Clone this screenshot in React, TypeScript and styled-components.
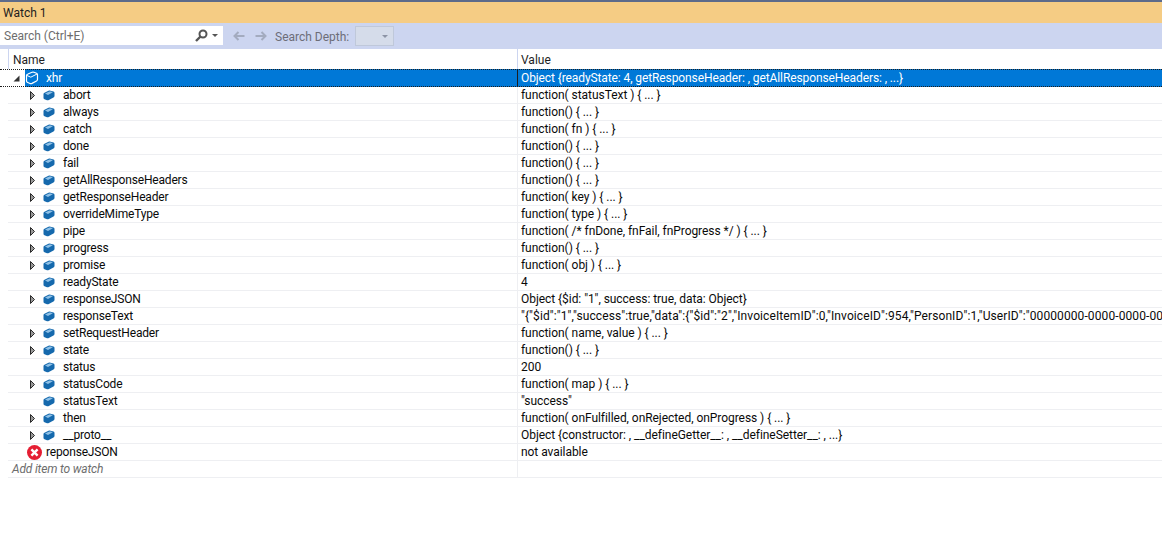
import React from "react";
import styled, { createGlobalStyle } from "styled-components";

const Global = createGlobalStyle`
  html, body { margin: 0; padding: 0; background: #fff; }
  body { font-family: Roboto, "Open Sans", "Liberation Sans", sans-serif; font-size: 12px; color: #0a0a0a; }
`;

const Page = styled.div`
  width: 1162px;
  height: 533px;
  overflow: hidden;
  display: flex;
  flex-direction: column;
  background: #fff;
`;

const TitleBar = styled.div`
  height: 21px;
  border-top: 2px solid #5d6b8a;
  background: #f5cc84;
  display: flex;
  align-items: center;
  padding-left: 3px;
  color: #1e1e1e;
`;

const Toolbar = styled.div`
  height: 26px;
  background: #ccd5f0;
  display: flex;
  align-items: center;
`;

const SearchBox = styled.div`
  width: 223px;
  height: 19px;
  margin-top: -1px;
  background: #fff;
  display: flex;
  align-items: center;
  padding: 0 5px 0 4px;
  box-sizing: border-box;
  color: #6d6d6d;
  justify-content: space-between;
`;

const SearchTools = styled.span`
  display: flex;
  align-items: center;
  gap: 4px;
`;

const NavIcons = styled.span`
  display: flex;
  gap: 10px;
  margin-left: 10px;
  margin-right: 8px;
`;

const DepthLabel = styled.span`
  color: #6d6d78;
  padding-top: 2px;
`;

const DepthSelect = styled.div`
  width: 39px;
  height: 20px;
  margin-left: 6px;
  background: #d5dcea;
  border: 1px solid #bfc8da;
  box-sizing: border-box;
  display: flex;
  align-items: center;
  justify-content: flex-end;
  padding-right: 5px;
`;

const HeaderRow = styled.div`
  height: 20px;
  display: grid;
  grid-template-columns: 517px 1fr;
  background: #fff;
`;

const HeaderCell = styled.div<{ $first?: boolean }>`
  display: flex;
  align-items: center;
  padding: 2px 0 0 ${(p) => (p.$first ? "4px" : "3px")};
  margin-left: ${(p) => (p.$first ? "8px" : "0")};
  border-left: 1px solid #ccd5f0;
  color: #1e1e1e;
`;

const Row = styled.div<{ $selected?: boolean }>`
  height: 17px;
  display: grid;
  grid-template-columns: 517px 1fr;
  box-sizing: border-box;
  white-space: nowrap;
  line-height: 16px;
  ${(p) =>
    p.$selected
      ? `
    height: 18px;
    border-top: 1px dotted #1e1e1e;
    border-bottom: 1px dotted #1e1e1e;
    background: linear-gradient(to right, #fff 25px, #0078d7 25px);
    color: #fff;
  `
      : ""}
`;

const NameCell = styled.div<{ $indent: number; $selected?: boolean }>`
  margin-left: 8px;
  display: flex;
  align-items: center;
  padding-left: ${(p) => p.$indent}px;
  letter-spacing: -0.18px;
  border-bottom: ${(p) => (p.$selected ? "none" : "1px solid #eeeff2")};
  overflow: hidden;
`;

const ValueCell = styled.div<{ $selected?: boolean; $spacing?: number }>`
  padding-left: 3px;
  letter-spacing: ${(p) => p.$spacing ?? -0.05}px;
  border-left: 1px solid ${(p) => (p.$selected ? "#1e1e1e" : "#eeeff2")};
  border-bottom: ${(p) => (p.$selected ? "none" : "1px solid #eeeff2")};
  overflow: hidden;
  display: flex;
  align-items: center;
`;

const Toggle = styled.span<{ $w: number }>`
  width: ${(p) => p.$w}px;
  height: 16px;
  flex: none;
  display: flex;
  align-items: center;
`;

const IconSlot = styled.span<{ $w: number }>`
  width: ${(p) => p.$w}px;
  flex: none;
  display: flex;
  align-items: center;
`;

const AddItem = styled.span`
  color: #6d6d6d;
  font-style: italic;
  padding-left: 4px;
`;

const Cube = ({ white }: { white?: boolean }) =>
  white ? (
    <svg width="14" height="14" viewBox="0 0 14 14">
      <path d="M1.5 4.5 Q1.5 3.5 3 3 L7 1.3 Q8 1 9 1.3 L11.5 2.3 Q12.5 2.7 12.5 3.8 V8.5 Q12.5 9.3 11.5 10 L7 12.4 Q6 12.9 5 12.5 L2.7 11.5 Q1.5 11 1.5 10 Z" fill="#0078d7" stroke="#fff" strokeWidth="1.2" />
      <path d="M2 4.5 L5.8 6.2 L12 3" fill="none" stroke="#fff" strokeWidth="1" />
    </svg>
  ) : (
    <svg width="12" height="11" viewBox="0 0 12 11">
      <path d="M0.5 4 Q0.5 3.2 1.5 2.7 L5.5 0.8 Q6.5 0.4 7.5 0.7 L10.5 1.6 Q11.5 2 11.5 3 V6 Q11.5 6.9 10.5 7.5 L5.8 10.1 Q5 10.5 4 10.2 L1.5 9.3 Q0.5 8.9 0.5 8 Z" fill="#1569ad" />
      <path d="M2 3.6 L6.3 1.5 Q7 1.3 7.8 1.5 L9.8 2.2 L5 4.9 Z" fill="#8ec0e6" />
    </svg>
  );

const ArrowCollapsed = () => (
  <svg width="5" height="9" viewBox="0 0 5 9">
    <path d="M0.5 0.5 L4.5 4.5 L0.5 8.5 Z" fill="#999" stroke="#2a2a2a" strokeWidth="1" />
  </svg>
);

const ArrowExpanded = () => (
  <svg width="7" height="7" viewBox="0 0 7 7">
    <path d="M6.5 0.5 V6.5 H0.5 Z" fill="#333" />
  </svg>
);

const ErrorIcon = () => (
  <svg width="15" height="15" viewBox="0 0 15 15">
    <circle cx="7.5" cy="7.5" r="7.5" fill="#e51e33" />
    <path d="M4.4 4.4 L10.6 10.6 M10.6 4.4 L4.4 10.6" stroke="#fff" strokeWidth="2.4" />
  </svg>
);

const SearchIcon = () => (
  <svg width="13" height="13" viewBox="0 0 13 13">
    <circle cx="8" cy="5" r="3.5" fill="none" stroke="#555" strokeWidth="2" />
    <path d="M5.5 7.5 L1 12" stroke="#555" strokeWidth="2.4" />
  </svg>
);

const Caret = ({ color }: { color: string }) => (
  <svg width="6" height="3" viewBox="0 0 6 3">
    <path d="M0 0 H6 L3 3 Z" fill={color} />
  </svg>
);

const NavArrow = ({ flip }: { flip?: boolean }) => (
  <svg width="12" height="10" viewBox="0 0 12 10" style={flip ? { transform: "scaleX(-1)" } : undefined}>
    <path d="M5.5 1 L1.5 5 L5.5 9 M1.5 5 H11.5" fill="none" stroke="#a3abbf" strokeWidth="2" />
  </svg>
);

const children: [string, string, boolean, number?][] = [
  ["abort", "function( statusText ) { ... }", true],
  ["always", "function() { ... }", true],
  ["catch", "function( fn ) { ... }", true],
  ["done", "function() { ... }", true],
  ["fail", "function() { ... }", true],
  ["getAllResponseHeaders", "function() { ... }", true],
  ["getResponseHeader", "function( key ) { ... }", true],
  ["overrideMimeType", "function( type ) { ... }", true],
  ["pipe", "function( /* fnDone, fnFail, fnProgress */ ) { ... }", true],
  ["progress", "function() { ... }", true],
  ["promise", "function( obj ) { ... }", true],
  ["readyState", "4", false],
  ["responseJSON", "Object {$id: \"1\", success: true, data: Object}", true],
  ["responseText", "\"{\"$id\":\"1\",\"success\":true,\"data\":{\"$id\":\"2\",\"InvoiceItemID\":0,\"InvoiceID\":954,\"PersonID\":1,\"UserID\":\"00000000-0000-0000-00", false, 0.1],
  ["setRequestHeader", "function( name, value ) { ... }", true],
  ["state", "function() { ... }", true],
  ["status", "200", false],
  ["statusCode", "function( map ) { ... }", true],
  ["statusText", "\"success\"", false],
  ["then", "function( onFulfilled, onRejected, onProgress ) { ... }", true],
  ["__proto__", "Object {constructor: , __defineGetter__: , __defineSetter__: , ...}", true],
];

export default function App() {
  return (
    <Page>
      <Global />
      <TitleBar>Watch 1</TitleBar>
      <Toolbar>
        <SearchBox>
          <span>Search (Ctrl+E)</span>
          <SearchTools>
            <SearchIcon />
            <Caret color="#555" />
          </SearchTools>
        </SearchBox>
        <NavIcons>
          <NavArrow />
          <NavArrow flip />
        </NavIcons>
        <DepthLabel>Search Depth:</DepthLabel>
        <DepthSelect>
          <Caret color="#8c93a5" />
        </DepthSelect>
      </Toolbar>
      <HeaderRow>
        <HeaderCell $first>Name</HeaderCell>
        <HeaderCell>Value</HeaderCell>
      </HeaderRow>
      <Row $selected>
        <NameCell $indent={5} $selected>
          <Toggle $w={12}><ArrowExpanded /></Toggle>
          <IconSlot $w={21}><Cube white /></IconSlot>
          <span>xhr</span>
        </NameCell>
        <ValueCell $selected $spacing={-0.1}>Object {"{"}readyState: 4, getResponseHeader: , getAllResponseHeaders: , ...{"}"}</ValueCell>
      </Row>
      {children.map(([name, value, expandable, spacing]) => (
        <Row key={name}>
          <NameCell $indent={22}>
            <Toggle $w={13}>{expandable && <ArrowCollapsed />}</Toggle>
            <IconSlot $w={20}><Cube /></IconSlot>
            <span>{name}</span>
          </NameCell>
          <ValueCell $spacing={spacing}>{value}</ValueCell>
        </Row>
      ))}
      <Row>
        <NameCell $indent={19}>
          <IconSlot $w={19}><ErrorIcon /></IconSlot>
          <span>reponseJSON</span>
        </NameCell>
        <ValueCell>not available</ValueCell>
      </Row>
      <Row>
        <NameCell $indent={0}>
          <AddItem>Add item to watch</AddItem>
        </NameCell>
        <ValueCell />
      </Row>
    </Page>
  );
}
